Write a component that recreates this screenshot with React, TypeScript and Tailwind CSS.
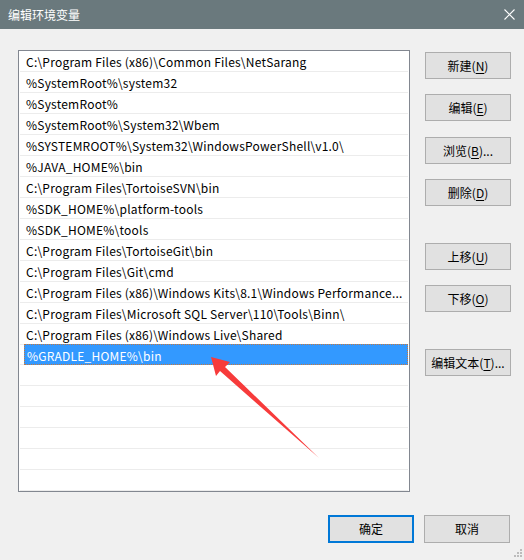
import React from "react";

const paths = [
  "C:\\Program Files (x86)\\Common Files\\NetSarang",
  "%SystemRoot%\\system32",
  "%SystemRoot%",
  "%SystemRoot%\\System32\\Wbem",
  "%SYSTEMROOT%\\System32\\WindowsPowerShell\\v1.0\\",
  "%JAVA_HOME%\\bin",
  "C:\\Program Files\\TortoiseSVN\\bin",
  "%SDK_HOME%\\platform-tools",
  "%SDK_HOME%\\tools",
  "C:\\Program Files\\TortoiseGit\\bin",
  "C:\\Program Files\\Git\\cmd",
  "C:\\Program Files (x86)\\Windows Kits\\8.1\\Windows Performance...",
  "C:\\Program Files\\Microsoft SQL Server\\110\\Tools\\Binn\\",
  "C:\\Program Files (x86)\\Windows Live\\Shared",
  "%GRADLE_HOME%\\bin",
];

const selected = 14;
const emptyRows = 6;

function Btn({
  label,
  hotkey,
  tail = "",
  className = "",
}: {
  label: string;
  hotkey?: string;
  tail?: string;
  className?: string;
}) {
  return (
    <button
      className={`w-[86px] h-[27px] flex items-center justify-center bg-[#e1e1e1] border border-[#adadad] text-[12px] text-black ${className}`}
    >
      {label}
      {hotkey && (
        <>
          (<span className="underline underline-offset-2">{hotkey}</span>)
        </>
      )}
      {tail}
    </button>
  );
}

export default function App() {
  return (
    <div className="relative w-[524px] h-[560px] bg-[#f0f0f0] font-['Noto_Sans_CJK_SC',sans-serif] text-[12px] text-black overflow-hidden">
      {/* title bar */}
      <div className="h-[29px] bg-[#6a797d] flex items-center justify-between pl-[8px] pr-[10px] text-white">
        <span className="text-[12px]">编辑环境变量</span>
        <svg width="11" height="11" viewBox="0 0 11 11" className="mr-[-1px]">
          <path d="M0.5 0.5L10.5 10.5M10.5 0.5L0.5 10.5" stroke="#fff" strokeWidth="1.1" />
        </svg>
      </div>

      <div className="pl-[18px] pt-[21px]">
        <div className="flex">
          {/* path list */}
          <div className="w-[392px] h-[442px] border border-[#828790] bg-white px-[1px] overflow-hidden tracking-[0.22px]">
            {paths.map((p, i) => (
              <div key={i} className="h-[21px] border-b border-[#ececec]">
                {i === selected ? (
                  <div className="ml-[4px] h-[21px] -mt-px pt-[2px] bg-[#3399ff] border border-dotted border-[#c8783c] text-white pl-[2px] flex items-center">
                    {p}
                  </div>
                ) : (
                  <div className="h-[20px] pt-[2px] pl-[6px] flex items-center">{p}</div>
                )}
              </div>
            ))}
            {Array.from({ length: emptyRows }).map((_, i) => (
              <div key={`e${i}`} className="h-[21px] border-b border-[#ececec]" />
            ))}
          </div>

          {/* action buttons */}
          <div className="ml-[15px] pt-[2px] flex flex-col">
            <Btn label="新建" hotkey="N" />
            <Btn label="编辑" hotkey="E" className="mt-[15px]" />
            <Btn label="浏览" hotkey="B" tail="..." className="mt-[16px]" />
            <Btn label="删除" hotkey="D" className="mt-[15px]" />
            <Btn label="上移" hotkey="U" className="mt-[37px]" />
            <Btn label="下移" hotkey="O" className="mt-[15px]" />
            <Btn label="编辑文本" hotkey="T" tail="..." className="mt-[37px]" />
          </div>
        </div>

        <div className="flex justify-end gap-[10px] mt-[23px] pr-[14px]">
          <button className="w-[86px] h-[28px] flex items-center justify-center bg-[#e1e1e1] border-2 border-[#0078d7] text-[12px]">
            确定
          </button>
          <button className="w-[86px] h-[28px] flex items-center justify-center bg-[#e1e1e1] border border-[#adadad] text-[12px]">
            取消
          </button>
        </div>
      </div>

      {/* size grip */}
      <svg className="absolute left-0 top-0 pointer-events-none" width="524" height="560">
        <g fill="#bcbcbc">
          <rect x="520" y="549" width="2" height="2" />
          <rect x="517" y="552" width="2" height="2" />
          <rect x="520" y="552" width="2" height="2" />
          <rect x="514" y="555" width="2" height="2" />
          <rect x="517" y="555" width="2" height="2" />
          <rect x="520" y="555" width="2" height="2" />
        </g>
        {/* red annotation arrow */}
        <polygon
          points="211,357 230,362 225,367 319,458 220,371 216,376"
          fill="#f73b3b"
        />
      </svg>
    </div>
  );
}
